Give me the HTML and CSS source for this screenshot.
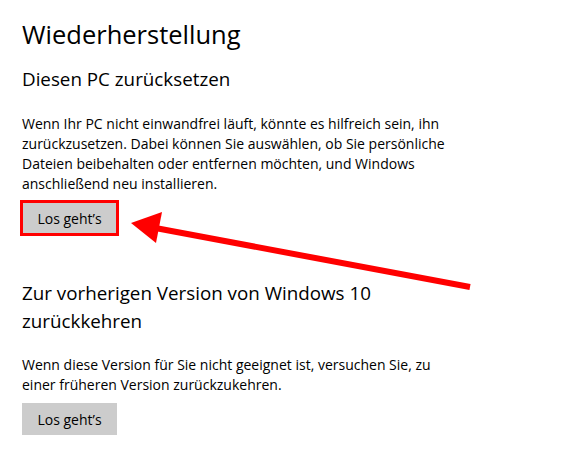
FILE: index.html
```html
<!DOCTYPE html>
<html lang="de">
<head>
  <meta charset="UTF-8">
  <title>Wiederherstellung</title>
  <link rel="stylesheet" href="styles.css">
</head>
<body>

  <!-- Recovery page -->
  <main class="page">
    <h1 class="title">Wiederherstellung</h1>

    <section class="group">
      <h2 class="group-title">Diesen PC zurücksetzen</h2>
      <p class="group-text">Wenn Ihr PC nicht einwandfrei läuft, könnte es hilfreich sein, ihn zurückzusetzen. Dabei können Sie auswählen, ob Sie persönliche Dateien beibehalten oder entfernen möchten, und Windows anschließend neu installieren.</p>
      <button class="btn marked">Los geht’s</button>
    </section>

    <section class="group second">
      <h2 class="group-title">Zur vorherigen Version von Windows 10 zurückkehren</h2>
      <p class="group-text">Wenn diese Version für Sie nicht geeignet ist, versuchen Sie, zu einer früheren Version zurückzukehren.</p>
      <button class="btn">Los geht’s</button>
    </section>
  </main>

  <!-- Red annotation arrow -->
  <svg class="arrow" width="579" height="462" viewBox="0 0 579 462">
    <line x1="470" y1="287" x2="150" y2="227" stroke="#ff0000" stroke-width="6" />
    <polygon points="131,223 162,212 156,243" fill="#ff0000" />
  </svg>

</body>
</html>
```

FILE: styles.css
```css
body {
  margin: 0;
  padding: 0;
  background: #fff;
  color: #000;
  font-family: 'Open Sans', sans-serif;
}

.page {
  padding: 16px 22px 0 22px;
  width: 440px;
}

.title {
  font-size: 25.5px;
  font-weight: 400;
  line-height: 36px;
  margin: 0;
}

.group-title {
  font-size: 18.8px;
  font-weight: 400;
  line-height: 28px;
  margin: 0;
}

.group {
  margin-top: 13px;
}

.group.second {
  margin-top: 45px;
}

.group-text {
  font-size: 14px;
  line-height: 20px;
  margin: 21px 0 8px 0;
}

.second .group-text {
  margin-top: 20px;
}

.btn {
  display: block;
  width: 95px;
  height: 32px;
  padding: 0;
  border: none;
  background: #cccccc;
  font-family: 'Open Sans', sans-serif;
  font-size: 14px;
  color: #000;
}

.btn.marked {
  outline: 3px solid #ff0000;
  outline-offset: -1px;
}

/* Overlay */
.arrow {
  position: absolute;
  top: 0;
  left: 0;
}
```
